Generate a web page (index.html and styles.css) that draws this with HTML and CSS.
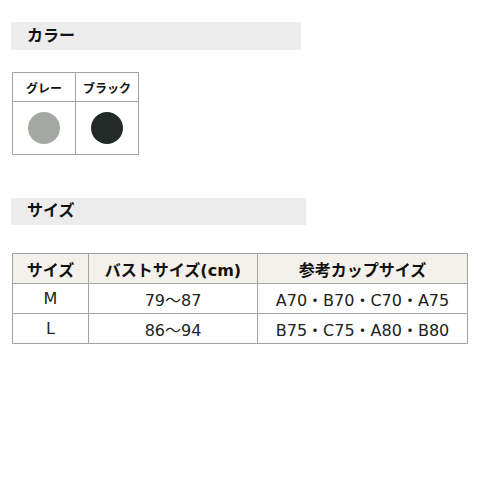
FILE: index.html
```html
<!DOCTYPE html>
<html lang="ja">
<head>
<meta charset="utf-8">
<link rel="stylesheet" href="styles.css">
</head>
<body>
<div class="page">
  <h2 class="bar bar-color">カラー</h2>
  <table class="colors">
    <tr><th>グレー</th><th>ブラック</th></tr>
    <tr><td><span class="dot gray"></span></td><td><span class="dot black"></span></td></tr>
  </table>
  <h2 class="bar bar-size">サイズ</h2>
  <table class="sizes">
    <tr><th class="c1">サイズ</th><th class="c2">バストサイズ(cm)</th><th class="c3">参考カップサイズ</th></tr>
    <tr><td>M</td><td>79～87</td><td>A70・B70・C70・A75</td></tr>
    <tr><td>L</td><td>86～94</td><td>B75・C75・A80・B80</td></tr>
  </table>
</div>
</body>
</html>
```
FILE: styles.css
```css
html, body { margin: 0; padding: 0; background: #fff; }
body { font-family: "DejaVu Sans", "Noto Sans CJK JP", sans-serif; color: #111; }
.page { padding: 22px 0 0 11px; }
.bar {
  margin: 0;
  background: #ececec;
  font-size: 16px;
  font-weight: bold;
  height: 28px;
  line-height: 28px;
  padding-left: 16px;
  box-sizing: border-box;
}
.bar-color { width: 290px; }
.bar-size { width: 295px; height: 27px; line-height: 25px; margin-top: 43px; }
table { border-collapse: collapse; }
.colors { margin-top: 22px; margin-left: 1px; }
.colors th, .colors td { border: 1px solid #a4a4a4; padding: 0; text-align: center; }
.colors th { font-size: 12px; height: 28px; width: 62px; }
.colors td { height: 52px; }
.dot { display: inline-block; width: 32px; height: 32px; border-radius: 50%; vertical-align: middle; }
.gray { background: #a4a8a2; }
.black { background: #222b28; }
.sizes { margin-top: 28px; margin-left: 1px; width: 456px; }
.sizes th, .sizes td { border: 1px solid #a4a4a4; text-align: center; padding: 0; height: 29px; }
.sizes th { background: #f4f0eb; font-size: 16px; font-weight: bold; }
.sizes td { font-size: 16px; color: #222; }
.c1 { width: 75px; }
.c2 { width: 168px; }
```
